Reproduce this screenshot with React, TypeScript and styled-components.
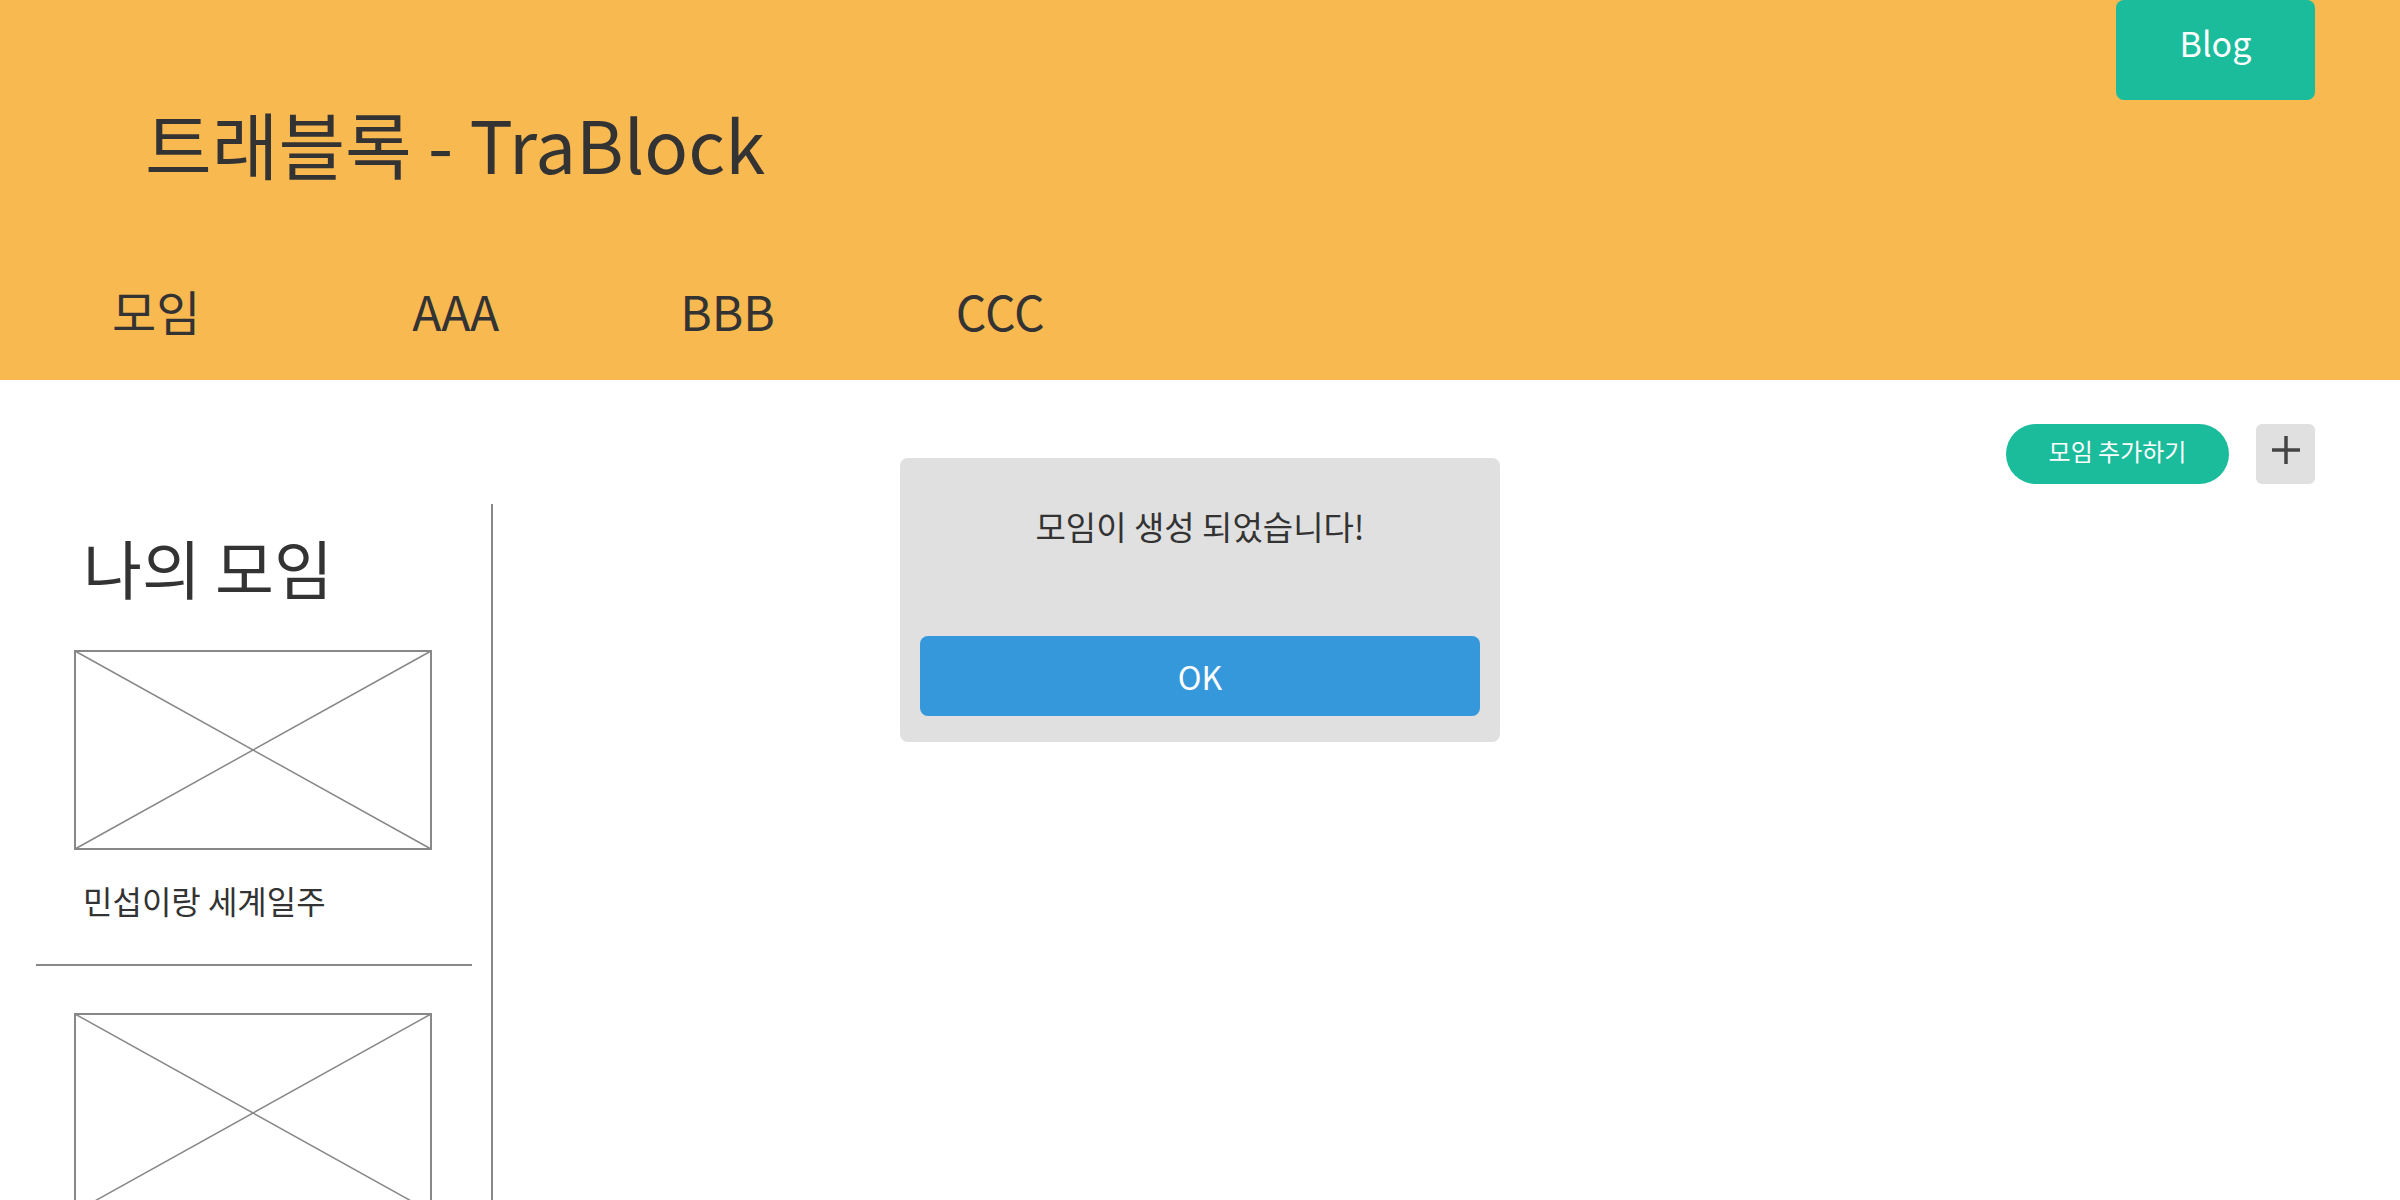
import React from "react";
import styled, { createGlobalStyle } from "styled-components";

const GlobalStyle = createGlobalStyle`
  html, body {
    margin: 0;
    padding: 0;
    background: #ffffff;
  }
  body {
    font-family: "Noto Sans CJK KR", "Noto Sans", sans-serif;
    color: #333333;
  }
  * { box-sizing: border-box; }
`;

const Page = styled.div`
  width: 2400px;
  height: 1200px;
  overflow: hidden;
  display: flex;
  flex-direction: column;
`;

const Header = styled.header`
  height: 380px;
  flex: none;
  background: #f8b951;
  display: flex;
  flex-direction: column;
`;

const TopBar = styled.div`
  height: 100px;
  display: flex;
  justify-content: flex-end;
  padding-right: 85px;
`;

const BlogButton = styled.button`
  width: 199px;
  height: 100px;
  border: none;
  border-radius: 8px;
  background: #1abc9c;
  color: #ffffff;
  font-family: "Noto Sans CJK KR", sans-serif;
  font-size: 34px;
  line-height: 1;
  padding: 0 0 14px;
  cursor: pointer;
`;

const Title = styled.h1`
  margin: 7px 0 0;
  padding-left: 145px;
  font-size: 72.5px;
  font-weight: 400;
  line-height: 1;
  color: #333333;
`;

const Nav = styled.nav`
  margin-top: 106px;
  padding-left: 112px;
  display: flex;
  gap: 181px;
`;

const NavItem = styled.a<{ $extra?: number }>`
  font-size: 48px;
  line-height: 1;
  color: #333333;
  text-decoration: none;
  margin-right: ${(p) => p.$extra ?? 0}px;
`;

const Main = styled.main`
  position: relative;
  flex: 1;
  display: flex;
  flex-direction: column;
  min-height: 0;
`;

const Toolbar = styled.div`
  display: flex;
  justify-content: flex-end;
  align-items: center;
  gap: 27px;
  padding: 44px 85px 0 0;
`;

const PillButton = styled.button`
  width: 223px;
  height: 60px;
  border: none;
  border-radius: 30px;
  background: #1abc9c;
  color: #ffffff;
  font-family: "Noto Sans CJK KR", sans-serif;
  font-size: 24px;
  line-height: 1;
  padding: 0 0 6px;
  cursor: pointer;
`;

const IconButton = styled.button`
  width: 59px;
  height: 60px;
  border: none;
  border-radius: 6px;
  background: #e0e0e0;
  display: flex;
  align-items: center;
  justify-content: center;
  padding: 0 0 8px;
  cursor: pointer;
`;

const Sidebar = styled.aside`
  margin: 20px 0 0 36px;
  width: 457px;
  flex: 1;
  border-right: 2px solid #888888;
  padding-right: 19px;
  display: flex;
  flex-direction: column;
`;

const SidebarTitle = styled.h2`
  margin: 30px 0 0;
  padding-left: 47px;
  font-size: 64px;
  font-weight: 400;
  line-height: 1;
  color: #333333;
`;

const GroupCard = styled.div<{ $top: number }>`
  margin-top: ${(p) => p.$top}px;
  padding-left: 38px;
  display: flex;
  flex-direction: column;
`;

const Thumb = styled.svg`
  display: block;
  width: 358px;
  height: 200px;
  flex: none;
`;

const GroupName = styled.div`
  margin-top: 34px;
  padding-left: 9px;
  font-size: 32px;
  line-height: 1;
  color: #333333;
`;

const Divider = styled.hr`
  margin: 48px 0 0;
  border: none;
  border-top: 2px solid #888888;
  width: 436px;
`;

const Modal = styled.div`
  position: absolute;
  top: 78px;
  left: 50%;
  transform: translateX(-50%);
  width: 600px;
  height: 284px;
  background: #e0e0e0;
  border-radius: 8px;
  padding: 49px 20px 26px;
  display: flex;
  flex-direction: column;
  justify-content: space-between;
  align-items: stretch;
`;

const ModalText = styled.p`
  margin: 0;
  text-align: center;
  font-size: 33px;
  line-height: 1.2;
  color: #333333;
`;

const OkButton = styled.button`
  height: 80px;
  border: none;
  border-radius: 8px;
  background: #3498db;
  color: #ffffff;
  font-family: "Noto Sans CJK KR", sans-serif;
  font-size: 32px;
  line-height: 1;
  cursor: pointer;
`;

const Placeholder = () => (
  <Thumb viewBox="0 0 358 200" preserveAspectRatio="none">
    <rect x="1" y="1" width="356" height="198" fill="#fff" stroke="#888" strokeWidth="2" />
    <line x1="1" y1="1" x2="357" y2="199" stroke="#888" strokeWidth="1.5" />
    <line x1="357" y1="1" x2="1" y2="199" stroke="#888" strokeWidth="1.5" />
  </Thumb>
);

export default function App() {
  return (
    <>
      <GlobalStyle />
      <Page>
        <Header>
          <TopBar>
            <BlogButton>Blog</BlogButton>
          </TopBar>
          <Title>트래블록 - TraBlock</Title>
          <Nav>
            <NavItem href="#" $extra={31}>모임</NavItem>
            <NavItem href="#">AAA</NavItem>
            <NavItem href="#">BBB</NavItem>
            <NavItem href="#">CCC</NavItem>
          </Nav>
        </Header>
        <Main>
          <Toolbar>
            <PillButton>모임 추가하기</PillButton>
            <IconButton aria-label="add">
              <svg width="30" height="30" viewBox="0 0 30 30">
                <line x1="15" y1="1" x2="15" y2="29" stroke="#444" strokeWidth="3.5" />
                <line x1="1" y1="15" x2="29" y2="15" stroke="#444" strokeWidth="3.5" />
              </svg>
            </IconButton>
          </Toolbar>
          <Sidebar>
            <SidebarTitle>나의 모임</SidebarTitle>
            <GroupCard $top={52}>
              <Placeholder />
              <GroupName>민섭이랑 세계일주</GroupName>
            </GroupCard>
            <Divider />
            <GroupCard $top={47}>
              <Placeholder />
            </GroupCard>
          </Sidebar>
          <Modal>
            <ModalText>모임이 생성 되었습니다!</ModalText>
            <OkButton>OK</OkButton>
          </Modal>
        </Main>
      </Page>
    </>
  );
}
